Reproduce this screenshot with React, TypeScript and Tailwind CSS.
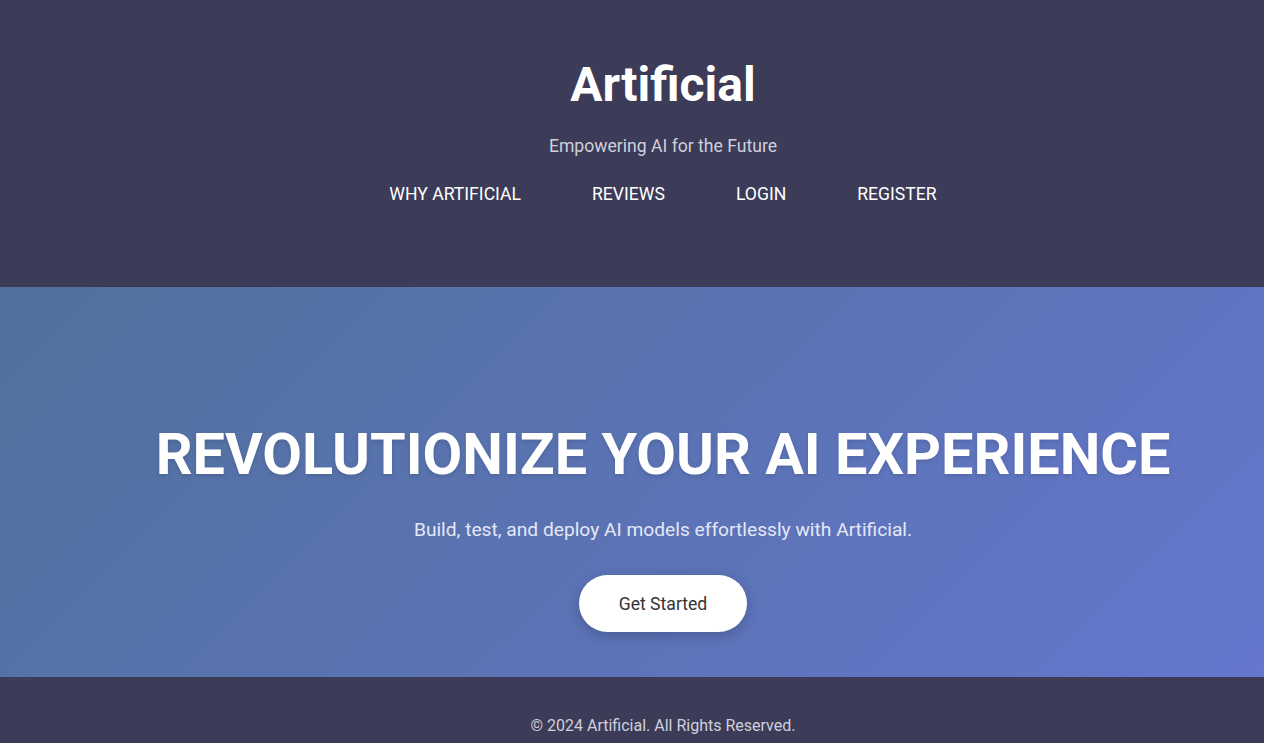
export default function App() {
  return (
    <div className="w-full overflow-hidden bg-[#3c3b58] font-['Roboto',sans-serif]">
      <div className="w-[1326px]">
        <header className="bg-[#3c3b58] pt-[57px] h-[287px] text-center">
          <h1 className="text-[48px] leading-[56px] font-bold text-white">Artificial</h1>
          <p className="mt-[21px] text-[17.6px] leading-[24px] text-[#d0d0dc]">Empowering AI for the Future</p>
          <nav className="mt-[24px] flex justify-center gap-[71px] text-[17.6px] leading-[24px] text-white">
            <a href="#">WHY ARTIFICIAL</a>
            <a href="#">REVIEWS</a>
            <a href="#">LOGIN</a>
            <a href="#">REGISTER</a>
          </nav>
        </header>

        <section className="h-[390px] bg-[linear-gradient(135deg,#50719b_0%,#5b73b5_50%,#6677cf_100%)] flex flex-col items-center text-center pt-[136px]">
          <h2 className="text-[57.6px] leading-[64px] font-bold text-white [text-shadow:0_2px_4px_rgba(0,0,0,0.12)]">
            REVOLUTIONIZE YOUR AI EXPERIENCE
          </h2>
          <p className="mt-[30px] text-[19.2px] leading-[26px] text-[#e4e8f6]">
            Build, test, and deploy AI models effortlessly with Artificial.
          </p>
          <button className="mt-[32px] bg-white text-[#333] text-[17.6px] leading-[24px] rounded-full w-[168px] h-[57px] shadow-[0_4px_14px_rgba(0,0,0,0.2)]">
            Get Started
          </button>
        </section>

        <footer className="bg-[#3c3b58] h-[66px] pt-[39px] text-center text-[16px] leading-[20px] text-[#d0d0dc]">
          © 2024 Artificial. All Rights Reserved.
        </footer>
      </div>
    </div>
  );
}
